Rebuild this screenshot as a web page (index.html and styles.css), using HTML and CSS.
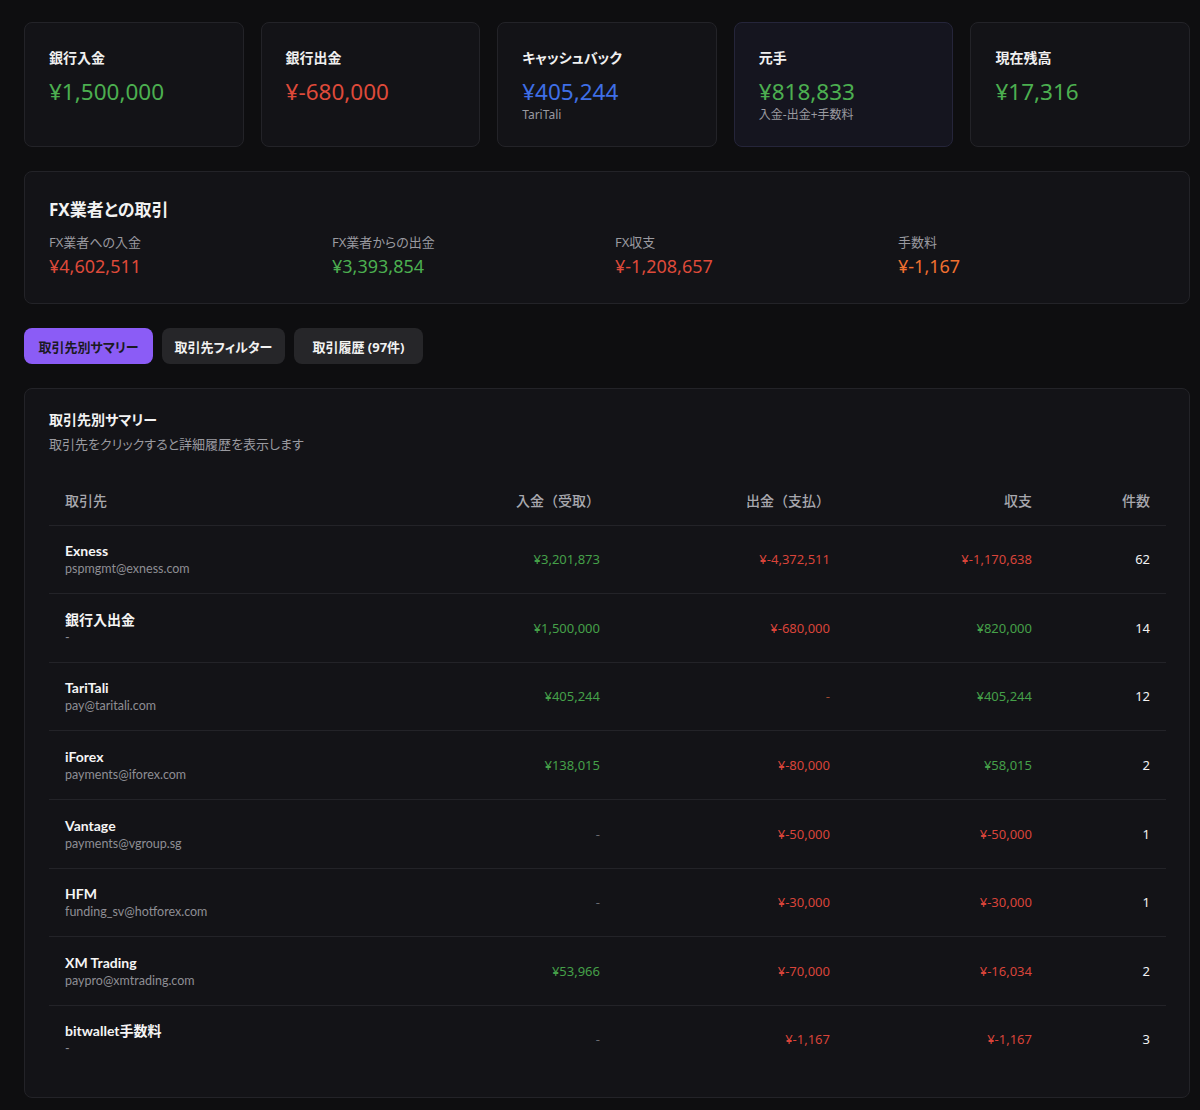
FILE: index.html
```html
<!DOCTYPE html>
<html lang="ja">
<head>
<meta charset="utf-8">
<link rel="stylesheet" href="styles.css">
</head>
<body>
<div class="page">
  <div class="stats">
    <div class="card stat">
      <div class="stat-label">銀行入金</div>
      <div class="stat-value green">¥1,500,000</div>
    </div>
    <div class="card stat">
      <div class="stat-label">銀行出金</div>
      <div class="stat-value red">¥-680,000</div>
    </div>
    <div class="card stat">
      <div class="stat-label">キャッシュバック</div>
      <div class="stat-value blue">¥405,244</div>
      <div class="stat-sub">TariTali</div>
    </div>
    <div class="card stat stat-accent">
      <div class="stat-label">元手</div>
      <div class="stat-value green">¥818,833</div>
      <div class="stat-sub">入金-出金+手数料</div>
    </div>
    <div class="card stat">
      <div class="stat-label">現在残高</div>
      <div class="stat-value green">¥17,316</div>
    </div>
  </div>

  <div class="card fx">
    <div class="fx-title">FX業者との取引</div>
    <div class="fx-grid">
      <div class="fx-item"><div class="fx-label">FX業者への入金</div><div class="fx-value red">¥4,602,511</div></div>
      <div class="fx-item"><div class="fx-label">FX業者からの出金</div><div class="fx-value green">¥3,393,854</div></div>
      <div class="fx-item"><div class="fx-label">FX収支</div><div class="fx-value red">¥-1,208,657</div></div>
      <div class="fx-item"><div class="fx-label">手数料</div><div class="fx-value orange">¥-1,167</div></div>
    </div>
  </div>

  <div class="tabs">
    <button class="tab tab-summary active">取引先別サマリー</button>
    <button class="tab tab-filter">取引先フィルター</button>
    <button class="tab tab-history">取引履歴 (97件)</button>
  </div>

  <div class="card summary">
    <div class="summary-title">取引先別サマリー</div>
    <div class="summary-sub">取引先をクリックすると詳細履歴を表示します</div>
    <table class="tbl">
      <colgroup>
        <col class="c1"><col class="c2"><col class="c3"><col class="c4"><col class="c5">
      </colgroup>
      <thead>
        <tr><th class="left">取引先</th><th>入金（受取）</th><th>出金（支払）</th><th>収支</th><th>件数</th></tr>
      </thead>
      <tbody>
        <tr class="short"><td class="left"><div class="nm">Exness</div><div class="em">pspmgmt@exness.com</div></td><td class="green">¥3,201,873</td><td class="red">¥-4,372,511</td><td class="red">¥-1,170,638</td><td class="cnt">62</td></tr>
        <tr><td class="left"><div class="nm">銀行入出金</div><div class="em">-</div></td><td class="green">¥1,500,000</td><td class="red">¥-680,000</td><td class="green">¥820,000</td><td class="cnt">14</td></tr>
        <tr class="short"><td class="left"><div class="nm">TariTali</div><div class="em">pay@taritali.com</div></td><td class="green">¥405,244</td><td class="dash-red">-</td><td class="green">¥405,244</td><td class="cnt">12</td></tr>
        <tr><td class="left"><div class="nm">iForex</div><div class="em">payments@iforex.com</div></td><td class="green">¥138,015</td><td class="red">¥-80,000</td><td class="green">¥58,015</td><td class="cnt">2</td></tr>
        <tr><td class="left"><div class="nm">Vantage</div><div class="em">payments@vgroup.sg</div></td><td class="dash">-</td><td class="red">¥-50,000</td><td class="red">¥-50,000</td><td class="cnt">1</td></tr>
        <tr class="short"><td class="left"><div class="nm">HFM</div><div class="em">funding_sv@hotforex.com</div></td><td class="dash">-</td><td class="red">¥-30,000</td><td class="red">¥-30,000</td><td class="cnt">1</td></tr>
        <tr><td class="left"><div class="nm">XM Trading</div><div class="em">paypro@xmtrading.com</div></td><td class="green">¥53,966</td><td class="red">¥-70,000</td><td class="red">¥-16,034</td><td class="cnt">2</td></tr>
        <tr class="short"><td class="left"><div class="nm">bitwallet手数料</div><div class="em">-</div></td><td class="dash">-</td><td class="red">¥-1,167</td><td class="red">¥-1,167</td><td class="cnt">3</td></tr>
      </tbody>
    </table>
  </div>
</div>
</body>
</html>
```

FILE: styles.css
```css
* { box-sizing: border-box; }
html, body {
  margin: 0;
  padding: 0;
  background: #0e0e10;
  color: #f2f2f2;
  font-family: "Noto Sans", "Noto Sans CJK JP", sans-serif;
}
.page {
  padding: 22px 10px 12px 24px;
}
.card {
  background: #131317;
  border: 1px solid #232328;
  border-radius: 8px;
}
.green { color: #4caf50; }
.red { color: #de4a3a; }
.blue { color: #3f6fe6; }
.orange { color: #f07030; }

.stats {
  display: grid;
  grid-template-columns: repeat(5, 1fr);
  gap: 17px;
}
.stat {
  padding: 25px 24px 24px;
}
.stat-accent {
  background: #15151f;
  border-color: #25253a;
}
.stat-label {
  font-size: 14px;
  line-height: 20px;
  font-weight: 700;
  color: #f0f0f0;
  font-feature-settings: "palt";
}
.stat-value {
  margin-top: 8px;
  font-size: 22.5px;
  line-height: 32px;
}
.stat-sub {
  font-size: 12px;
  line-height: 14px;
  color: #9a9aa0;
  font-feature-settings: "palt";
}

.fx {
  margin-top: 24px;
  padding: 24px;
}
.fx-title {
  font-size: 17px;
  line-height: 28px;
  font-weight: 700;
  font-feature-settings: "palt";
}
.fx-grid {
  margin-top: 8px;
  display: grid;
  grid-template-columns: repeat(4, 1fr);
  column-gap: 16px;
}
.fx-label {
  font-size: 13px;
  line-height: 20px;
  color: #9a9aa0;
  font-feature-settings: "palt";
}
.fx-value {
  font-size: 18px;
  line-height: 26px;
  margin-top: 1px;
}

.tabs {
  margin-top: 24px;
  display: flex;
  gap: 9px;
}
.tab {
  height: 36px;
  padding: 0;
  text-align: center;
  border: none;
  border-radius: 8px;
  background: #262629;
  color: #f2f2f2;
  font-family: inherit;
  font-size: 13px;
  font-weight: 700;
  font-feature-settings: "palt";
}
.tab-summary { width: 129px; }
.tab-filter { width: 123px; }
.tab-history { width: 129px; }
.tab.active {
  background: #8b5cf6;
  color: #1a1a22;
}

.summary {
  margin-top: 24px;
  padding: 21px 24px 24px;
}
.summary-title {
  font-size: 14px;
  line-height: 20px;
  font-weight: 700;
  font-feature-settings: "palt";
}
.summary-sub {
  margin-top: 4px;
  font-size: 13px;
  line-height: 20px;
  color: #9a9aa0;
  font-feature-settings: "palt";
}
.tbl {
  margin-top: 26px;
  width: 100%;
  border-collapse: collapse;
  table-layout: fixed;
}
.c1 { width: 351px; }
.c2 { width: 216px; }
.c3 { width: 230px; }
.c4 { width: 202px; }
.c5 { width: 118px; }
.tbl th {
  height: 45px;
  padding: 0 16px 4px;
  text-align: right;
  font-size: 14px;
  font-weight: 500;
  color: #a8a8ae;
  border-bottom: 1px solid #232328;
}
.tbl td {
  height: 68px;
  padding: 16px;
  text-align: right;
  font-size: 13px;
  vertical-align: middle;
  border-bottom: 1px solid #232328;
}
.tbl tr.short td {
  height: 68px;
  padding-top: 15px;
  padding-bottom: 15px;
}
.tbl tbody tr:last-child td { border-bottom: none; }
.tbl .left { text-align: left; }
.nm {
  font-family: "Lato", "Noto Sans CJK JP", sans-serif;
  font-size: 14px;
  line-height: 20px;
  font-weight: 700;
  color: #f5f5f5;
}
.em {
  font-family: "Lato", "Noto Sans CJK JP", sans-serif;
  font-size: 12.5px;
  line-height: 16px;
  color: #8e8e94;
}
.tbl td.green { color: #45a049; }
.tbl td.red { color: #d9443a; }
.dash { color: #6b6b70; }
.dash-red { color: #a04a30; }
.cnt { color: #f2f2f2; }
```
